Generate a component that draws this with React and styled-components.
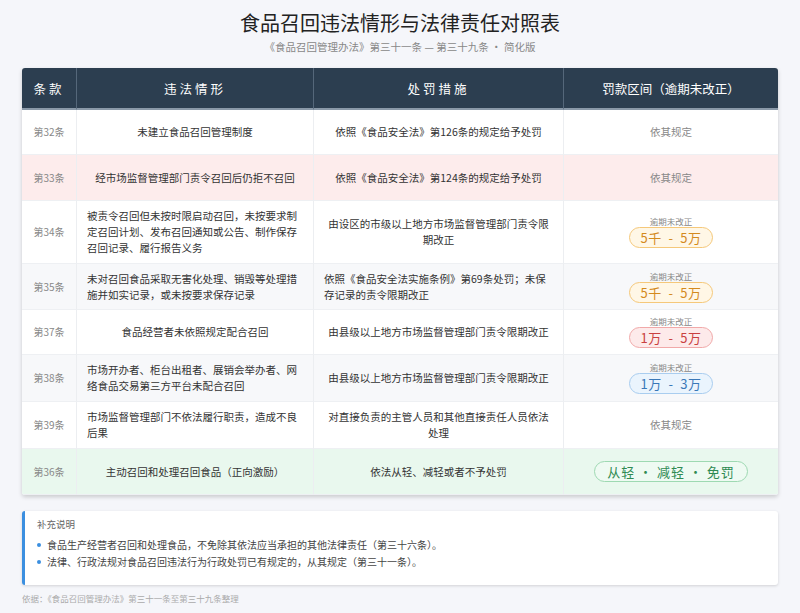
import styled, { createGlobalStyle } from "styled-components";

const Global = createGlobalStyle`
  body {
    margin: 0;
    background: #f5f6fa;
    font-family: "Noto Sans CJK SC", sans-serif;
    color: #333;
  }
`

const Page = styled.div`
  width: 800px;
  height: 613px;
  padding: 10px 22px 0;
  box-sizing: border-box;
`

const Title = styled.h1`
  margin: 0;
  text-align: center;
  font-size: 20px;
  font-weight: 400;
  color: #222;
  line-height: 26px;
`

const Sub = styled.p`
  margin: 3px 0 13px;
  text-align: center;
  font-size: 10.5px;
  color: #888;
  line-height: 16px;
`

const Table = styled.div`
  display: grid;
  grid-template-columns: 54px 237px 250px 1fr;
  border-radius: 3px;
  overflow: hidden;
  box-shadow: 0 2px 4px rgba(0, 0, 0, 0.18);
  background: #fff;
`

const Head = styled.div`
  background: #2c3e50;
  color: #fff;
  height: 40px;
  display: flex;
  align-items: center;
  justify-content: center;
  font-size: 12.5px;
  letter-spacing: ${p => p.$spaced ? "3px" : "0"};
  border-left: ${p => p.$first ? "none" : "1px solid #55677a"};
  border-bottom: 2px solid #8a99a8;
`

const Cell = styled.div`
  height: ${p => p.$h}px;
  background: ${p => p.$bg};
  display: flex;
  flex-direction: column;
  align-items: center;
  justify-content: center;
  text-align: center;
  font-size: ${p => p.$small ? "10px" : "10.5px"};
  color: ${p => p.$muted ? "#888" : "#333"};
  line-height: 16px;
  padding: 0 ${p => p.$first ? "2px" : "10px"};
  white-space: ${p => p.$first ? "nowrap" : "normal"};
  box-sizing: border-box;
  border-left: ${p => p.$first ? "none" : "1px solid #eceef1"};
  border-bottom: 1px solid #eef0f3;
`

const Left = styled(Cell)`
  align-items: flex-start;
  text-align: left;
`

const Overdue = styled.span`
  font-size: 8.5px;
  color: #888;
  line-height: 11px;
`

const Pill = styled.span`
  display: inline-block;
  padding: 0 ${p => p.$wide ? "12px" : "10px"};
  border: 1px solid ${p => p.$c.b};
  background: ${p => p.$c.bg};
  color: ${p => p.$c.t};
  border-radius: 11px;
  font-size: 13px;
  line-height: 19px;
  white-space: pre;
  letter-spacing: ${p => p.$wide ? "1px" : "0.5px"};
`

const colors = {
  orange: { b: "#f5c87a", bg: "#fff7e6", t: "#d48a1c" },
  red: { b: "#f1a9a9", bg: "#fdeaea", t: "#c94040" },
  blue: { b: "#a9cdef", bg: "#eaf4fd", t: "#3a78b8" },
  green: { b: "#9ed9b2", bg: "#eefaf2", t: "#2f8a52" },
}

const rows = [
  { no: "第32条", a: "未建立食品召回管理制度", b: "依照《食品安全法》第126条的规定给予处罚", h: 45, bg: "#fff", center: true },
  { no: "第33条", a: "经市场监督管理部门责令召回后仍拒不召回", b: "依照《食品安全法》第124条的规定给予处罚", h: 46, bg: "#fdecec", center: true },
  { no: "第34条", a: "被责令召回但未按时限启动召回，未按要求制定召回计划、发布召回通知或公告、制作保存召回记录、履行报告义务", b: "由设区的市级以上地方市场监督管理部门责令限期改正", h: 63, bg: "#fff", fine: ["5千  -  5万", "orange"] },
  { no: "第35条", a: "未对召回食品采取无害化处理、销毁等处理措施并如实记录，或未按要求保存记录", b: "依照《食品安全法实施条例》第69条处罚；未保存记录的责令限期改正", h: 46, bg: "#f7f8fa", fine: ["5千  -  5万", "orange"], leftB: true },
  { no: "第37条", a: "食品经营者未依照规定配合召回", b: "由县级以上地方市场监督管理部门责令限期改正", h: 45, bg: "#fff", center: true, fine: ["1万  -  5万", "red"] },
  { no: "第38条", a: "市场开办者、柜台出租者、展销会举办者、网络食品交易第三方平台未配合召回", b: "由县级以上地方市场监督管理部门责令限期改正", h: 47, bg: "#f7f8fa", fine: ["1万  -  3万", "blue"] },
  { no: "第39条", a: "市场监督管理部门不依法履行职责，造成不良后果", b: "对直接负责的主管人员和其他直接责任人员依法处理", h: 47, bg: "#fff" },
  { no: "第36条", a: "主动召回和处理召回食品（正向激励）", b: "依法从轻、减轻或者不予处罚", h: 46, bg: "#e9f8ee", center: true, green: true },
]

const Note = styled.div`
  margin-top: 16px;
  background: #fff;
  border-left: 3px solid #3b8fe0;
  border-radius: 3px;
  box-shadow: 0 1px 3px rgba(0, 0, 0, 0.15);
  padding: 6px 14px 22px 12px;
  height: 74px;
  box-sizing: border-box;
`

const NoteTitle = styled.div`
  font-size: 9.5px;
  color: #666;
  line-height: 14px;
  margin-bottom: 5px;
`

const Item = styled.div`
  font-size: 10px;
  color: #444;
  line-height: 17px;
  display: flex;
  align-items: center;
  gap: 6px;
  &::before {
    content: "";
    width: 4px;
    height: 4px;
    border-radius: 50%;
    background: #3b8fe0;
  }
`

const Foot = styled.div`
  margin-top: 7px;
  font-size: 8.5px;
  color: #aaa;
`

export default function App() {
  return (
    <Page>
      <Global />
      <Title>食品召回违法情形与法律责任对照表</Title>
      <Sub>《食品召回管理办法》第三十一条 — 第三十九条 · 简化版</Sub>
      <Table>
        <Head $first $spaced>条款</Head>
        <Head $spaced>违法情形</Head>
        <Head $spaced>处罚措施</Head>
        <Head>罚款区间（逾期未改正）</Head>
        {rows.map(r => {
          const A = r.center ? Cell : Left
          const B = r.leftB ? Left : Cell
          return [
            <Cell key={r.no + "n"} $first $h={r.h} $bg={r.bg} $muted $small>{r.no}</Cell>,
            <A key={r.no + "a"} $h={r.h} $bg={r.bg}>{r.a}</A>,
            <B key={r.no + "b"} $h={r.h} $bg={r.bg}>{r.b}</B>,
            <Cell key={r.no + "c"} $h={r.h} $bg={r.bg} $muted>
              {r.green ? <Pill $wide $c={colors.green}>从轻 · 减轻 · 免罚</Pill>
                : r.fine ? <><Overdue>逾期未改正</Overdue><Pill $c={colors[r.fine[1]]}>{r.fine[0]}</Pill></>
                : "依其规定"}
            </Cell>,
          ]
        })}
      </Table>
      <Note>
        <NoteTitle>补充说明</NoteTitle>
        <Item>食品生产经营者召回和处理食品，不免除其依法应当承担的其他法律责任（第三十六条）。</Item>
        <Item>法律、行政法规对食品召回违法行为行政处罚已有规定的，从其规定（第三十一条）。</Item>
      </Note>
      <Foot>依据：《食品召回管理办法》第三十一条至第三十九条整理</Foot>
    </Page>
  )
}
